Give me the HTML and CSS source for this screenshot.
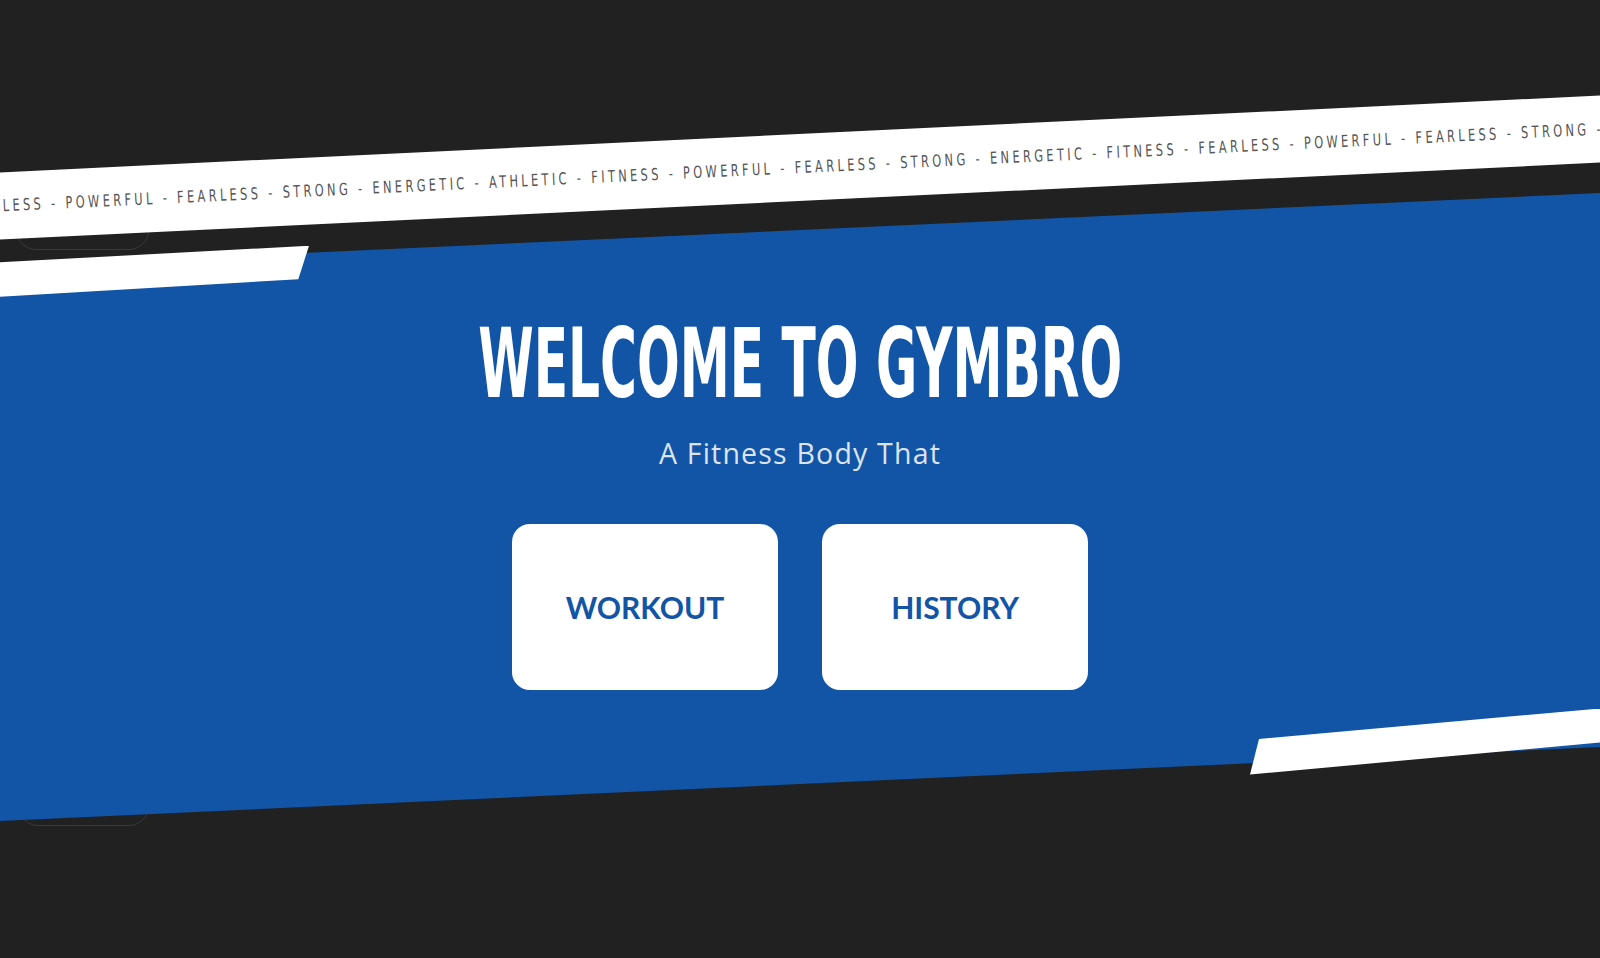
FILE: index.html
```html
<!DOCTYPE html>
<html lang="en">
<head>
<meta charset="utf-8">
<title>GymBro</title>
<link rel="stylesheet" href="styles.css">
</head>
<body>
  <div class="ghost ghost-top"></div>
  <div class="ghost ghost-bottom"></div>

  <div class="ticker">
    <span class="ticker-text">FEARLESS - POWERFUL - FEARLESS - STRONG - ENERGETIC - ATHLETIC - FITNESS - POWERFUL - FEARLESS - STRONG - ENERGETIC - FITNESS - FEARLESS - POWERFUL - FEARLESS - STRONG - ENERGETIC - ATHLETIC</span>
  </div>

  <main class="hero">
    <span class="slash slash-left"></span>
    <span class="slash slash-right"></span>
    <h1 class="title"><span class="title-text">WELCOME TO GYMBRO</span></h1>
    <p class="tagline">A Fitness Body That</p>
    <div class="actions">
      <a class="card-btn" href="#">WORKOUT</a>
      <a class="card-btn" href="#">HISTORY</a>
    </div>
  </main>
</body>
</html>
```
FILE: styles.css
```css
html, body {
  margin: 0;
  padding: 0;
}

body {
  position: relative;
  height: 958px;
  overflow: hidden;
  background: #212121;
  font-family: "Lato", "Liberation Sans", sans-serif;
}

.ghost {
  position: absolute;
  height: 60px;
  border: 1px solid #3a3a3a;
  border-radius: 20px;
}

.ghost-top {
  left: 16px;
  top: 188px;
  width: 131px;
}

.ghost-bottom {
  left: 18px;
  top: 764px;
  width: 129px;
}

.ticker {
  position: relative;
  z-index: 2;
  margin: 134px -80px 0;
  height: 67px;
  background: #ffffff;
  transform: rotate(-2.75deg);
  display: flex;
  align-items: center;
  overflow: hidden;
  white-space: nowrap;
}

.ticker-text {
  display: inline-block;
  margin-left: 39px;
  font-family: "DejaVu Sans Condensed", sans-serif;
  font-size: 16.5px;
  letter-spacing: 4.4px;
  color: #555555;
  transform: scaleX(0.7655);
  transform-origin: 0 50%;
}

.hero {
  position: relative;
  isolation: isolate;
  margin-top: -8px;
  height: 628px;
  box-sizing: border-box;
  padding-top: 123px;
  display: flex;
  flex-direction: column;
  align-items: center;
}

.hero::before {
  content: "";
  position: absolute;
  inset: 0;
  z-index: -1;
  background: #1254a6;
  clip-path: polygon(0 74px, 100% 0, 100% 554px, 0 100%);
}

.slash {
  position: absolute;
  background: #ffffff;
}

.slash-left {
  left: 0;
  top: 52.7px;
  width: 309px;
  height: 51px;
  clip-path: polygon(0 16.6px, 100% 0, 298.3px 33.6px, 0 100%);
}

.slash-right {
  right: 0;
  top: 515.5px;
  width: 350px;
  height: 66px;
  clip-path: polygon(9px 30.5px, 100% 0, 100% 34px, 0 100%);
}

.title {
  margin: 0;
  font-family: "DejaVu Sans Condensed", sans-serif;
  font-weight: 700;
  font-size: 96px;
  line-height: 96px;
  color: #ffffff;
  white-space: nowrap;
}

.title-text {
  display: inline-block;
  transform: scaleX(0.582);
}

.tagline {
  margin: 24px 0 0;
  font-family: "Open Sans", sans-serif;
  font-weight: 500;
  font-size: 28.5px;
  line-height: 34px;
  letter-spacing: 1.2px;
  color: #dde3ef;
}

.actions {
  display: flex;
  gap: 44px;
  margin-top: 54px;
}

.card-btn {
  width: 266px;
  height: 166px;
  border-radius: 18px;
  background: #ffffff;
  display: flex;
  align-items: center;
  justify-content: center;
  font-family: "Lato", sans-serif;
  font-weight: 700;
  font-size: 30px;
  color: #1254a6;
  text-decoration: none;
}
```
